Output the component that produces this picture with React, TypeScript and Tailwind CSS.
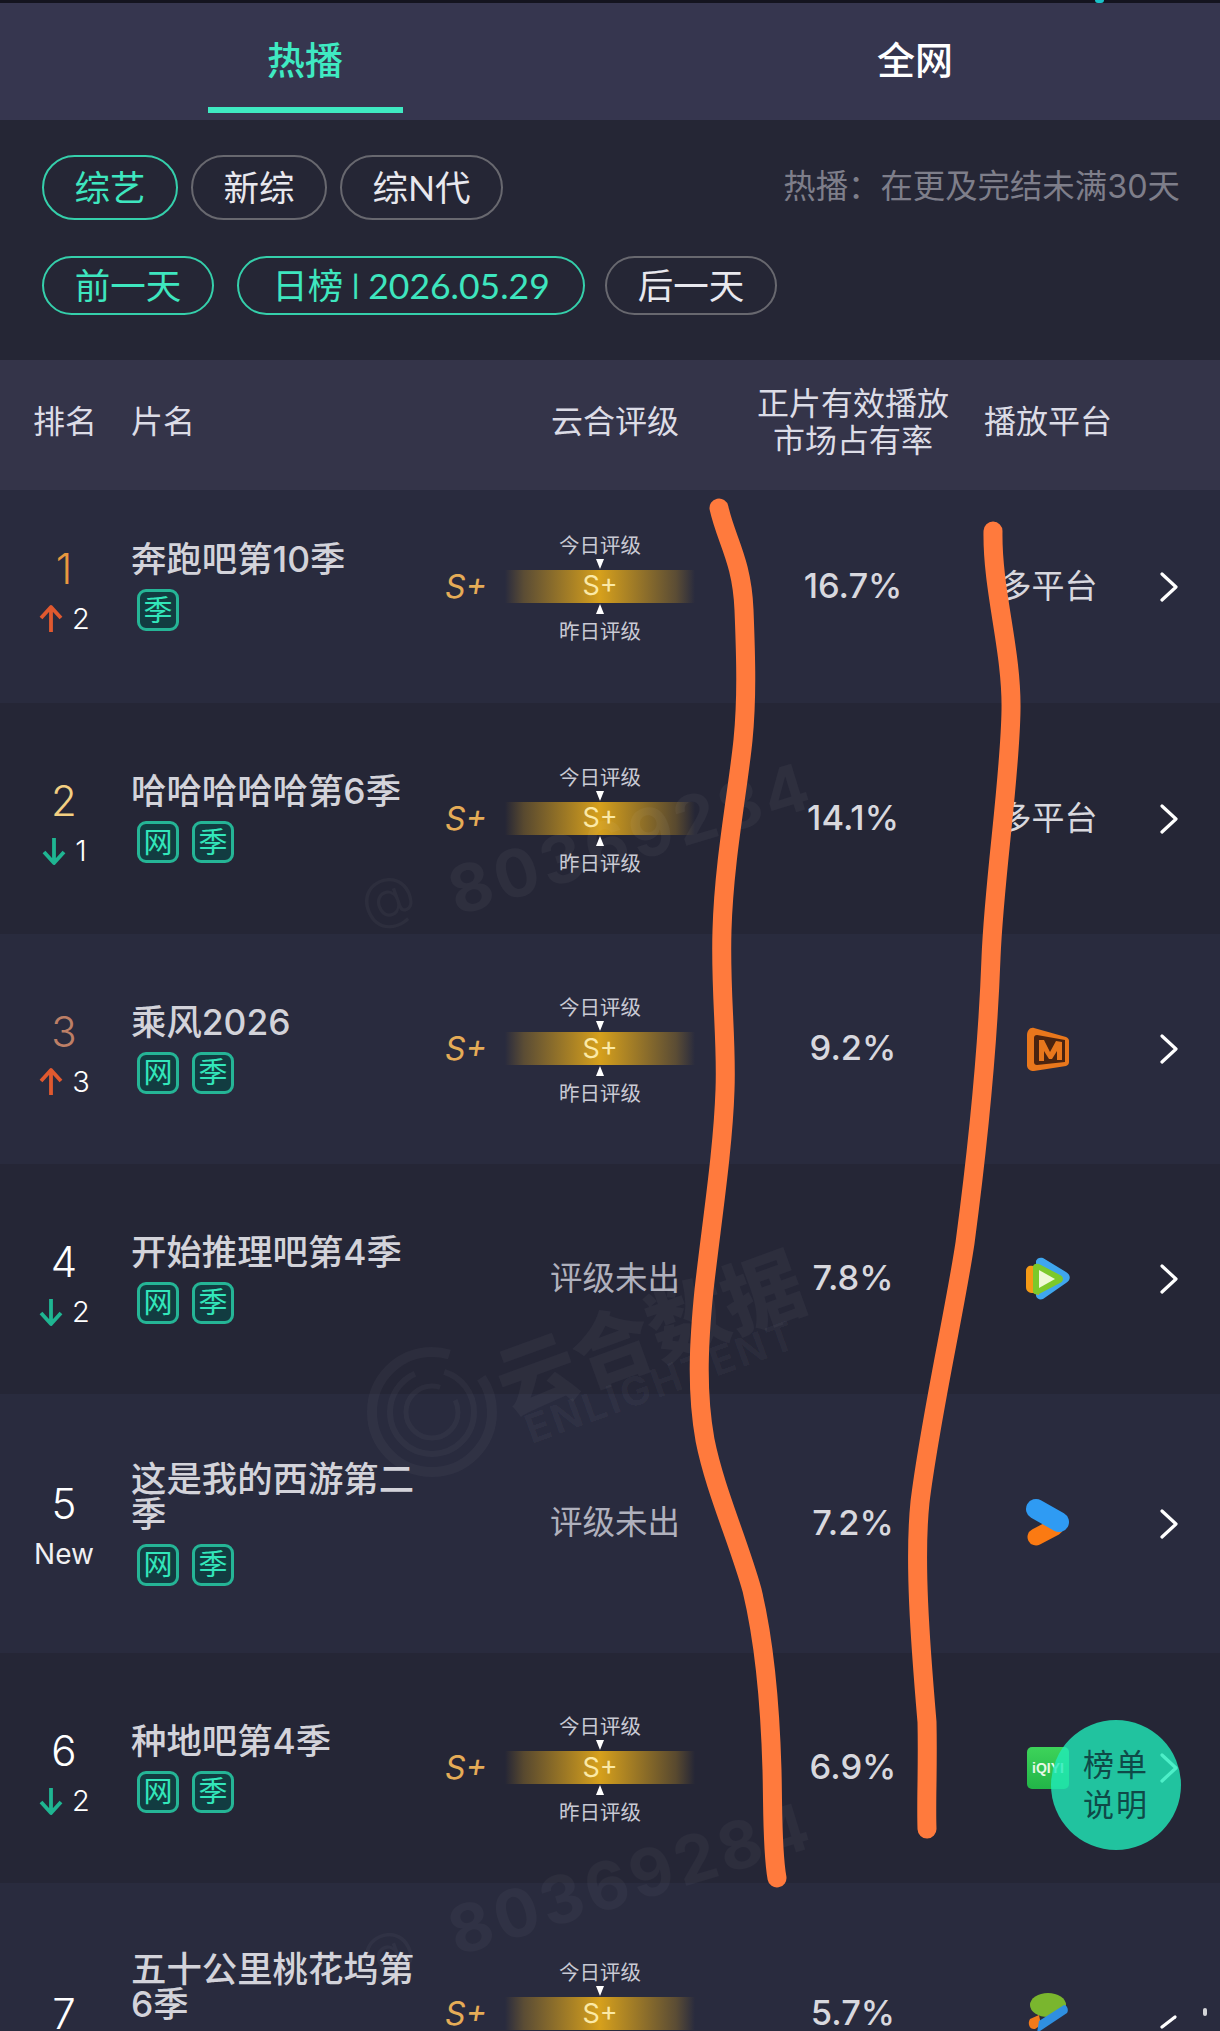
import React from "react";

const font = "font-['Inter','Noto_Sans_CJK_SC',sans-serif]";

function Pill({ label, on, w }: { label: React.ReactNode; on?: boolean; w: string }) {
  return (
    <div
      className={`${w} h-full flex items-center justify-center rounded-full border-[2.5px] whitespace-pre text-[35.5px] font-['Lato','Noto_Sans_CJK_SC',sans-serif] ${
        on ? "border-[#35cfab] text-[#3ee6bf]" : "border-[#68686f] text-[#e8e8ee]"
      }`}
    >
      {label}
    </div>
  );
}

function Tag({ t }: { t: string }) {
  return (
    <div className="w-[42px] h-[42px] flex items-center justify-center rounded-[9px] border-[3px] border-[#25b596] bg-[#123c41] text-[#32e6ba] text-[29px] leading-none">
      {t}
    </div>
  );
}

function Arrow({ up }: { up: boolean }) {
  return (
    <svg width="26" height="30" viewBox="0 0 26 30" fill="none">
      {up ? (
        <path d="M13 28V4M3 14L13 3l10 11" stroke="#e0592f" strokeWidth="3.8" strokeLinejoin="round" />
      ) : (
        <path d="M13 2v24M3 16l10 11 10-11" stroke="#1fb592" strokeWidth="3.8" strokeLinejoin="round" />
      )}
    </svg>
  );
}

function Rating() {
  return (
    <div className="flex items-center pl-[23px]">
      <div className="w-[60px] italic text-[#e5ac57] text-[32px] leading-none">S+</div>
      <div className="w-[190px] pt-[4px] flex flex-col items-center text-[#c9cad4] text-[20.5px] leading-[24px]">
        <div className="mb-[1px]">今日评级</div>
        <div className="w-0 h-0 border-x-[4px] border-x-transparent border-t-[10px] border-t-white mb-[1px]" />
        <div className="w-full h-[33px] flex items-center justify-center text-[#fbe9a6] text-[27px] bg-[linear-gradient(90deg,#c9962000_0%,#c9962050_10%,#d6a01c_50%,#c9962050_90%,#c9962000_100%)]">
          S+
        </div>
        <div className="w-0 h-0 border-x-[4px] border-x-transparent border-b-[10px] border-b-white mt-[1px]" />
        <div className="mt-[6px]">昨日评级</div>
      </div>
    </div>
  );
}

const Mango = () => (
  <svg width="46" height="46" viewBox="0 0 46 46" fill="none">
    <path d="M9 2L41 11c2 1 3 2 3 4v21c0 2-1 3-3 4L9 45c-4 0-7-2-7-6V9c0-4 3-8 7-7Z" fill="#e8771c" />
    <path d="M12 9L40 14V36L12 39c-2 0-3-1-3-3V12c0-2 1-3 3-3Z" fill="#4a2410" />
    <path d="M14 35V14h5l6 12 6-11 6 1v18h-5V25l-5 8h-3l-5-8v10Z" fill="#e8771c" />
  </svg>
);

const Tencent = () => (
  <svg width="48" height="46" viewBox="0 0 48 46">
    <path d="M12 5c1-3 4-4 7-3l23 14c5 3 5 8 0 11L19 43c-3 1-6 0-7-3Z" fill="#3fa6ee" />
    <path d="M2 15c0-4 3-6 7-5l6-1v30l-6-2c-4 0-7-2-7-6Z" fill="#f59a16" />
    <path d="M9 11c0-3 3-4 6-3l21 11c4 2 4 6 0 8L15 38c-3 1-6 0-6-3Z" fill="#7cc92a" />
    <path d="M15 14l16 9-16 9Z" fill="#eef9d6" />
  </svg>
);

const Youku = () => (
  <svg className="-mt-[3px]" width="46" height="48" viewBox="0 0 46 48" fill="none">
    <path d="M11 39l19-10" stroke="#fb7a12" strokeWidth="17" strokeLinecap="round" />
    <path d="M11 11l23 13" stroke="#2f9bf3" strokeWidth="20" strokeLinecap="round" />
  </svg>
);

const Iqiyi = () => (
  <div className="w-[42px] h-[42px] rounded-[5px] bg-[linear-gradient(180deg,#3dd35a,#22b548)] flex items-center justify-center text-[#e8f8e8] text-[14px] font-bold font-['Liberation_Sans',sans-serif]">
    iQIYI
  </div>
);

const Bili = () => (
  <svg width="46" height="46" viewBox="0 0 46 46" fill="none">
    <ellipse cx="23" cy="14" rx="18" ry="12" fill="#7ab62e" />
    <path d="M5 28c-3 5 0 11 5 10l6-4-2-10Z" fill="#f27a1a" />
    <path d="M12 42L42 22c2-3 0-8-3-8L14 30Z" fill="#2f8fe0" />
  </svg>
);

type Row = {
  rank: string;
  rankColor: string;
  up?: boolean;
  delta?: string;
  isNew?: boolean;
  title: string;
  tags: string[];
  rated: boolean;
  share: string;
  platform: React.ReactNode;
  cls: string;
  cut?: boolean;
};

const rows: Row[] = [
  { rank: "1", rankColor: "text-[#e8983f]", up: true, delta: "2", title: "奔跑吧第10季", tags: ["季"], rated: true, share: "16.7%", platform: <span>多平台</span>, cls: "h-[213px] pb-[20px] bg-[#292b3e]" },
  { rank: "2", rankColor: "text-[#f3cf82]", up: false, delta: "1", title: "哈哈哈哈哈第6季", tags: ["网", "季"], rated: true, share: "14.1%", platform: <span>多平台</span>, cls: "h-[231px] bg-[#252636]" },
  { rank: "3", rankColor: "text-[#bd7f66]", up: true, delta: "3", title: "乘风2026", tags: ["网", "季"], rated: true, share: "9.2%", platform: <Mango />, cls: "h-[230px] bg-[#292b3e]" },
  { rank: "4", rankColor: "text-white", up: false, delta: "2", title: "开始推理吧第4季", tags: ["网", "季"], rated: false, share: "7.8%", platform: <Tencent />, cls: "h-[230px] bg-[#252636]" },
  { rank: "5", rankColor: "text-white", isNew: true, title: "这是我的西游第二季", tags: ["网", "季"], rated: false, share: "7.2%", platform: <Youku />, cls: "h-[259px] bg-[#292b3e]" },
  { rank: "6", rankColor: "text-white", up: false, delta: "2", title: "种地吧第4季", tags: ["网", "季"], rated: true, share: "6.9%", platform: <Iqiyi />, cls: "h-[230px] bg-[#252636]" },
  { rank: "7", rankColor: "text-white", title: "五十公里桃花坞第6季", tags: ["网", "季"], rated: true, share: "5.7%", platform: <Bili />, cls: "h-[262px] bg-[#292b3e]", cut: true },
];

function TableRow({ r }: { r: Row }) {
  return (
    <div className={`flex items-center ${r.cls}`}>
      <div className={`w-[131px] pr-[3px] flex flex-col items-center ${r.delta ? "mt-[10px]" : r.isNew ? "mt-[5px]" : ""}`}>
        <div className={`${r.rankColor} text-[42px] leading-[46px] font-light`}>{r.rank}</div>
        {r.delta && (
          <div className="mt-[9px] h-[36px] flex items-center gap-[8px] text-white text-[29px] font-light">
            <Arrow up={!!r.up} />
            <span>{r.delta}</span>
          </div>
        )}
        {r.isNew && <div className="mt-[9px] h-[36px] flex items-center text-[#f0f0f2] text-[28px]">New</div>}
      </div>
      <div className="w-[291px] flex flex-col gap-[12px]">
        <div className="w-[286px] text-[35.4px] leading-[35px] font-medium text-[#d3d3da]">{r.title}</div>
        <div className="flex gap-[13px] pl-[6px]">
          {r.tags.map((t) => (
            <Tag key={t} t={t} />
          ))}
        </div>
      </div>
      <div className="w-[356px]">
        {r.rated ? <Rating /> : <div className="pl-[128px] text-[32.5px] text-[#b0b1bd]">评级未出</div>}
      </div>
      <div className="w-[150px] mr-[30px] pb-[2px] text-center text-[34.5px] font-medium text-[#d8d8de]">{r.share}</div>
      <div className="w-[180px] flex justify-center text-[33px] text-[#d8d8de]">{r.platform}</div>
      <svg className="ml-[22px]" width="18" height="30" viewBox="0 0 18 30" fill="none">
        <path d={r.cut ? "M15 18L2 28" : "M2 2l14 13L2 28"} stroke="#fff" strokeWidth="3.2" strokeLinecap="round" strokeLinejoin="round" />
      </svg>
    </div>
  );
}

function WaterMark() {
  return (
    <>
      <div className="absolute left-[450px] top-[860px] -rotate-[17deg] origin-left text-white/[0.045] text-[66px] font-bold tracking-[4px] whitespace-nowrap leading-none">
        80369284
      </div>
      <div className="absolute left-[360px] top-[870px] -rotate-[20deg] text-white/[0.04] text-[56px] leading-none font-light">@</div>
      <div className="absolute left-[450px] top-[1900px] -rotate-[17deg] origin-left text-white/[0.035] text-[66px] font-bold tracking-[4px] whitespace-nowrap leading-none">
        80369284
      </div>
      <div className="absolute left-[360px] top-[1925px] -rotate-[20deg] text-white/[0.035] text-[56px] leading-none font-light">@</div>
      <div className="absolute left-[490px] top-[1294px] -rotate-[20deg] text-white/[0.04] text-[80px] font-black whitespace-nowrap leading-none">
        云合数据
      </div>
      <div className="absolute left-[518px] top-[1362px] -rotate-[20deg] text-white/[0.04] text-[40px] font-bold tracking-[3px] whitespace-nowrap leading-none">
        ENLIGHTENT
      </div>
      <svg className="absolute left-[365px] top-[1345px]" width="134" height="134" viewBox="0 0 134 134" fill="none" stroke="#fff" strokeOpacity="0.035">
        <circle cx="67" cy="67" r="60" strokeWidth="10" strokeDasharray="300 40" />
        <circle cx="67" cy="67" r="42" strokeWidth="6" strokeDasharray="180 30" />
        <circle cx="67" cy="67" r="26" strokeWidth="5" strokeDasharray="130 20" />
      </svg>
    </>
  );
}

export default function App() {
  return (
    <div className={`relative w-[1220px] h-[2031px] overflow-hidden bg-[#292b3e] ${font}`}>
      <div className="h-[3px] bg-[#14141f]" />
      <div className="grid grid-cols-2 h-[117px] bg-[#36364f] text-[38px] leading-[48px]">
        <div className="flex flex-col items-center pt-[33px] text-[#3feac2] font-medium">
          <div>热播</div>
          <div className="mt-[23px] w-[195px] h-[6px] bg-[#3feac2]" />
        </div>
        <div className="flex flex-col items-center pt-[33px] text-white font-medium">
          <div>全网</div>
        </div>
      </div>

      <div className="h-[240px] bg-[#252635] px-[42px] pt-[35px]">
        <div className="flex items-center h-[65px] gap-[13px]">
          <Pill label="综艺" on w="w-[136px]" />
          <Pill label="新综" w="w-[136px]" />
          <Pill label="综N代" w="w-[163px]" />
          <div className="ml-auto -mr-[2px] text-[32.4px] text-[#7e7e8a] whitespace-nowrap">热播：在更及完结未满30天</div>
        </div>
        <div className="flex items-center h-[59px] mt-[36px]">
          <Pill label="前一天" on w="w-[172px]" />
          <Pill
            label={
              <>
                日榜 <span className="text-[26px] font-bold">|</span> 2026.05.29
              </>
            }
            on
            w="w-[348px] ml-[23px]"
          />
          <Pill label="后一天" w="w-[172px] ml-[20px]" />
        </div>
      </div>

      <div className="h-[130px] pb-[6px] bg-[#343449] flex items-center text-[32px] text-[#dcdce6]">
        <div className="w-[131px] pl-[33px]">排名</div>
        <div className="w-[291px]">片名</div>
        <div className="w-[356px] pl-[129px] whitespace-nowrap">云合评级</div>
        <div className="w-[150px] mr-[30px] flex justify-center leading-[37px] text-center whitespace-nowrap">
          正片有效播放
          <br />
          市场占有率
        </div>
        <div className="w-[180px] text-center">播放平台</div>
      </div>

      {rows.map((r) => (
        <TableRow key={r.rank} r={r} />
      ))}

      <WaterMark />

      <div className="absolute top-0 left-[1095px] w-[9px] h-[3px] rounded-b-full bg-[#19c3c9]" />
      <div className="absolute left-[1203px] top-[2008px] w-[4px] h-[8px] rounded-full bg-white/80" />

      <svg className="absolute left-0 top-0 pointer-events-none" width="1220" height="2031" viewBox="0 0 1220 2031" fill="none">
        <path
          d="M719 508C726 540 742 560 744 610C746 660 747 700 743 740C738 790 724 860 722 930C720 990 727 1040 725 1090C723 1150 712 1220 704 1290C699 1340 696 1390 705 1440C715 1490 738 1540 752 1590C764 1640 770 1700 772 1770C773 1810 772 1850 777 1878"
          stroke="#ff7a3d"
          strokeWidth="19"
          strokeLinecap="round"
          strokeLinejoin="round"
        />
        <path
          d="M993 531C992 590 1012 650 1011 710C1010 780 994 880 991 958C988 1040 980 1130 965 1243C955 1310 930 1420 920 1502C914 1560 920 1640 927 1722C928 1770 926 1800 927 1829"
          stroke="#ff7a3d"
          strokeWidth="19"
          strokeLinecap="round"
          strokeLinejoin="round"
        />
      </svg>

      <div className="absolute left-[1051px] top-[1720px] w-[130px] h-[130px] rounded-full bg-[#20ebba]/80 flex items-center justify-center text-center text-[31px] leading-[40px] tracking-[2px] text-[#0f4a48]">
        榜单
        <br />
        说明
      </div>
    </div>
  );
}
